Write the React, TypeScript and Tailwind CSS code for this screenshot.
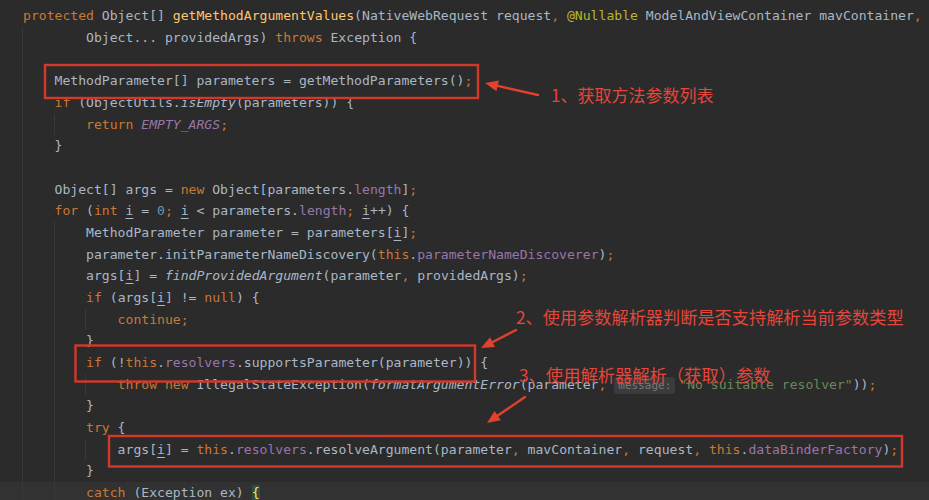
import React from 'react';

// Darcula palette
const K = 'text-[#cc7832]';
const T = 'text-[#a9b7c6]';
const M = 'text-[#ffc66d]';
const A = 'text-[#bbb529]';
const F = 'text-[#9876aa]';
const N = 'text-[#6897bb]';
const S = 'text-[#6a8759]';
const I = 'text-[#a9b7c6] italic';
const FI = 'text-[#9876aa] italic';
const U = 'text-[#a9b7c6] underline decoration-1 underline-offset-[3px]';

type Tok = [string, string];
type Line = { indent: number; guides: number[]; toks: Tok[]; current?: boolean };

const lines: Line[] = [
  {
    indent: 0,
    guides: [],
    toks: [
      [K, 'protected'],
      [T, ' Object[] '],
      [M, 'getMethodArgumentValues'],
      [T, '(NativeWebRequest request'],
      [K, ','],
      [T, ' '],
      [A, '@Nullable'],
      [T, ' ModelAndViewContainer mavContainer'],
      [K, ','],
    ],
  },
  { indent: 8, guides: [0], toks: [[T, 'Object... providedArgs) '], [K, 'throws'], [T, ' Exception {']] },
  { indent: 0, guides: [0], toks: [] },
  { indent: 4, guides: [0], toks: [[T, 'MethodParameter[] parameters = getMethodParameters()'], [K, ';']] },
  { indent: 4, guides: [0], toks: [[K, 'if'], [T, ' (ObjectUtils.'], [I, 'isEmpty'], [T, '(parameters)) {']] },
  { indent: 8, guides: [0, 4], toks: [[K, 'return'], [T, ' '], [FI, 'EMPTY_ARGS'], [K, ';']] },
  { indent: 4, guides: [0], toks: [[T, '}']] },
  { indent: 0, guides: [0], toks: [] },
  {
    indent: 4,
    guides: [0],
    toks: [[T, 'Object[] args = '], [K, 'new'], [T, ' Object[parameters.'], [F, 'length'], [T, ']'], [K, ';']],
  },
  {
    indent: 4,
    guides: [0],
    toks: [
      [K, 'for'],
      [T, ' ('],
      [K, 'int'],
      [T, ' '],
      [U, 'i'],
      [T, ' = '],
      [N, '0'],
      [K, ';'],
      [T, ' '],
      [U, 'i'],
      [T, ' < parameters.'],
      [F, 'length'],
      [K, ';'],
      [T, ' '],
      [U, 'i'],
      [T, '++) {'],
    ],
  },
  { indent: 8, guides: [0, 4], toks: [[T, 'MethodParameter parameter = parameters['], [U, 'i'], [T, ']'], [K, ';']] },
  {
    indent: 8,
    guides: [0, 4],
    toks: [
      [T, 'parameter.initParameterNameDiscovery('],
      [K, 'this'],
      [T, '.'],
      [F, 'parameterNameDiscoverer'],
      [T, ')'],
      [K, ';'],
    ],
  },
  {
    indent: 8,
    guides: [0, 4],
    toks: [
      [T, 'args['],
      [U, 'i'],
      [T, '] = '],
      [I, 'findProvidedArgument'],
      [T, '(parameter'],
      [K, ','],
      [T, ' providedArgs)'],
      [K, ';'],
    ],
  },
  {
    indent: 8,
    guides: [0, 4],
    toks: [[K, 'if'], [T, ' (args['], [U, 'i'], [T, '] != '], [K, 'null'], [T, ') {']],
  },
  { indent: 12, guides: [0, 4, 8], toks: [[K, 'continue;']] },
  { indent: 8, guides: [0, 4], toks: [[T, '}']] },
  {
    indent: 8,
    guides: [0, 4],
    toks: [[K, 'if'], [T, ' (!'], [K, 'this'], [T, '.'], [F, 'resolvers'], [T, '.supportsParameter(parameter)) {']],
  },
  {
    indent: 12,
    guides: [0, 4, 8],
    toks: [
      [K, 'throw'],
      [T, ' '],
      [K, 'new'],
      [T, ' IllegalStateException('],
      [I, 'formatArgumentError'],
      [T, '(parameter'],
      [K, ','],
      [T, ' '],
      ['HINT', 'message:'],
      [S, '"No suitable resolver"'],
      [T, '))'],
      [K, ';'],
    ],
  },
  { indent: 8, guides: [0, 4], toks: [[T, '}']] },
  { indent: 8, guides: [0, 4], toks: [[K, 'try'], [T, ' {']] },
  {
    indent: 12,
    guides: [0, 4, 8],
    toks: [
      [T, 'args['],
      [U, 'i'],
      [T, '] = '],
      [K, 'this'],
      [T, '.'],
      [F, 'resolvers'],
      [T, '.resolveArgument(parameter'],
      [K, ','],
      [T, ' mavContainer'],
      [K, ','],
      [T, ' request'],
      [K, ','],
      [T, ' '],
      [K, 'this'],
      [T, '.'],
      [F, 'dataBinderFactory'],
      [T, ')'],
      [K, ';'],
    ],
  },
  { indent: 8, guides: [0, 4], toks: [[T, '}']] },
  {
    indent: 8,
    guides: [0, 4],
    current: true,
    toks: [[K, 'catch'], [T, ' (Exception ex) '], ['BRACE', '{']],
  },
];

function renderTok([cls, text]: Tok, i: number) {
  if (cls === 'HINT') {
    return (
      <span
        key={i}
        className="mr-[4px] inline-block h-[17px] rounded-[3px] bg-[#3a3b3c] px-[4px] align-middle text-[11px] leading-[17px] text-[#777a7c]"
      >
        {text}
      </span>
    );
  }
  if (cls === 'BRACE') {
    return (
      <span key={i} className="bg-[#304c45] text-[#ffef28]">
        {text}
      </span>
    );
  }
  return (
    <span key={i} className={cls}>
      {text}
    </span>
  );
}

// arrow with filled head, tail -> tip
function Arrow({ x1, y1, x2, y2 }: { x1: number; y1: number; x2: number; y2: number }) {
  const dx = x2 - x1;
  const dy = y2 - y1;
  const len = Math.hypot(dx, dy);
  const ux = dx / len;
  const uy = dy / len;
  const head = 13;
  const half = 5.5;
  const bx = x2 - ux * head;
  const by = y2 - uy * head;
  const pts = `${x2},${y2} ${bx - uy * half},${by + ux * half} ${bx + uy * half},${by - ux * half}`;
  return (
    <g>
      <line x1={x1} y1={y1} x2={bx + ux * 2} y2={by + uy * 2} stroke="#e1412f" strokeWidth={2.4} strokeLinecap="round" />
      <polygon points={pts} fill="#e1412f" />
    </g>
  );
}

export default function App() {
  return (
    <div className="relative h-[500px] w-[929px] overflow-hidden bg-[#2b2b2b] font-['DejaVu_Sans_Mono','Liberation_Mono',monospace] text-[13.1px]">
      <div className="flex flex-col pt-[5.2px]">
        {lines.map((ln, idx) => (
          <div
            key={idx}
            className={`relative h-[21.68px] whitespace-pre pl-[23px] leading-[21.68px] ${ln.current ? 'bg-[#323232]' : ''}`}
          >
            {ln.guides.map((g) => (
              <span
                key={g}
                className="absolute top-0 h-full w-px bg-[#393939]"
                style={{ left: 22 + g * 7.9 }}
              />
            ))}
            <span className="relative">
              {' '.repeat(ln.indent)}
              {ln.toks.map(renderTok)}
            </span>
          </div>
        ))}
      </div>

      {/* annotation boxes and arrows */}
      <svg className="absolute inset-0" width={929} height={500} viewBox="0 0 929 500">
        <rect x={45} y={65} width={433} height={33} fill="none" stroke="#d3392b" strokeWidth={2.4} />
        <rect x={75.5} y={345.5} width={399.5} height={36} fill="none" stroke="#d3392b" strokeWidth={2.4} />
        <rect x={109} y={436} width={793} height={30.5} fill="none" stroke="#d3392b" strokeWidth={2.4} />
        <Arrow x1={538} y1={95} x2={485} y2={83} />
        <Arrow x1={516} y1={330} x2={481} y2={348} />
        <Arrow x1={525} y1={397} x2={487} y2={423} />
      </svg>

      <div className="absolute left-[551px] top-[84px] font-['Noto_Sans_CJK_SC',sans-serif] text-[17px] leading-[22px] text-[#e4463b]">
        1、获取方法参数列表
      </div>
      <div className="absolute left-[516px] top-[306px] font-['Noto_Sans_CJK_SC',sans-serif] text-[17.2px] leading-[22px] text-[#e4463b]">
        2、使用参数解析器判断是否支持解析当前参数类型
      </div>
      <div className="absolute left-[519px] top-[364px] font-['Noto_Sans_CJK_SC',sans-serif] text-[17.3px] leading-[22px] text-[#e4463b]">
        3、使用解析器解析（获取）参数
      </div>
    </div>
  );
}
